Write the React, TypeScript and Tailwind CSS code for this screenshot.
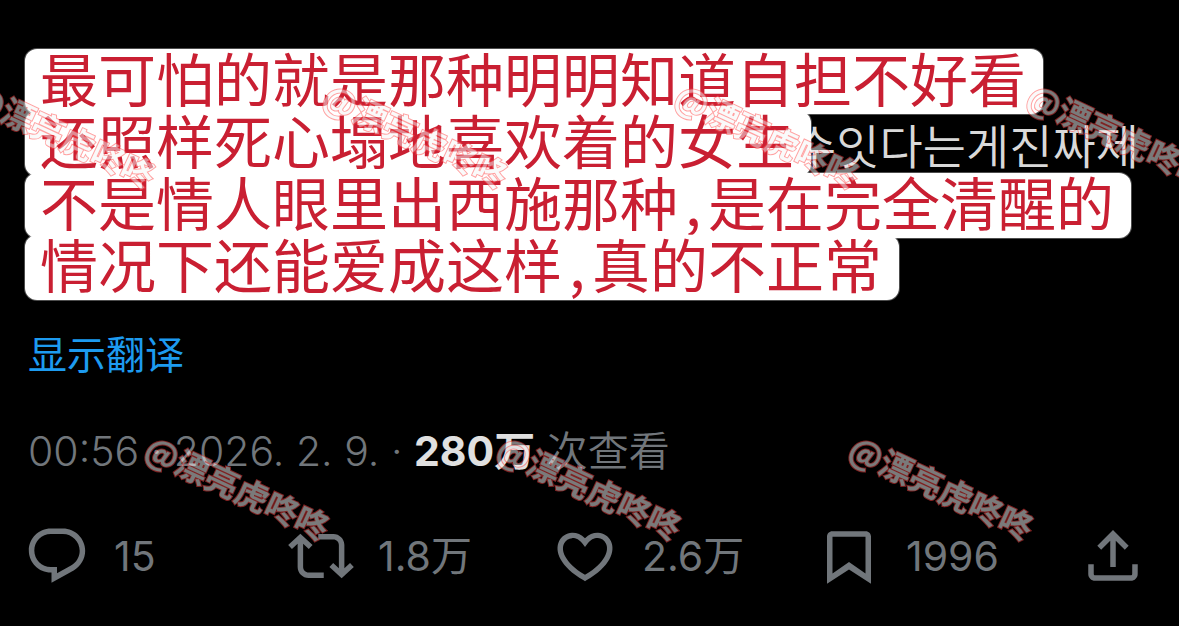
import type { ReactNode } from "react";

const REPLY =
  "M1.751 10c0-4.42 3.584-8 8.005-8h4.366c4.49 0 8.129 3.64 8.129 8.13 0 2.96-1.607 5.68-4.196 7.11l-8.054 4.46v-3.69h-.067c-4.49.1-8.183-3.51-8.183-8.01zm8.005-6c-3.317 0-6.005 2.69-6.005 6 0 3.37 2.77 6.08 6.138 6.01l.351-.01h1.761v2.3l5.087-2.81c1.951-1.08 3.163-3.13 3.163-5.36 0-3.39-2.744-6.13-6.129-6.13H9.756z";
const REPOST =
  "M4.5 3.88l4.432 4.14-1.364 1.46L5.5 7.55V16c0 1.1.896 2 2 2H13v2H7.5c-2.209 0-4-1.79-4-4V7.55L1.432 9.48.068 8.02 4.5 3.88zM16.5 6H11V4h5.5c2.209 0 4 1.79 4 4v8.45l2.068-1.93 1.364 1.46-4.432 4.14-4.432-4.14 1.364-1.46 2.068 1.93V8c0-1.1-.896-2-2-2z";
const LIKE =
  "M16.697 5.5c-1.222-.06-2.679.51-3.89 2.16l-.805 1.09-.806-1.09C9.984 6.01 8.526 5.44 7.304 5.5c-1.243.07-2.349.78-2.91 1.91-.552 1.12-.633 2.78.479 4.82 1.074 1.97 3.257 4.27 7.129 6.61 3.87-2.34 6.052-4.64 7.126-6.61 1.111-2.04 1.03-3.7.477-4.82-.561-1.13-1.666-1.84-2.908-1.91zm4.187 7.69c-1.351 2.48-4.001 5.12-8.379 7.67l-.503.3-.504-.3c-4.379-2.55-7.029-5.19-8.382-7.67-1.36-2.5-1.41-4.86-.514-6.67.887-1.79 2.647-2.91 4.601-3.01 1.651-.09 3.368.56 4.798 2.01 1.429-1.45 3.146-2.1 4.796-2.01 1.954.1 3.714 1.22 4.601 3.01.896 1.81.846 4.17-.514 6.67z";
const BOOKMARK =
  "M4 4.9C4 3.85 4.85 3 5.9 3h12.2C19.15 3 20 3.85 20 4.9v17.2l-8-5.2-8 5.2V4.9zM6 5v13.4l6-4.2 6 4.2V5H6z";
const SHARE =
  "M12 2.59l5.7 5.7-1.41 1.42L13 6.41V16h-2V6.41l-3.3 3.3-1.41-1.42L12 2.59zM21 15l-.02 3.51c0 1.38-1.12 2.49-2.5 2.49H5.5C4.11 21 3 19.88 3 18.5V15h2v3.5c0 .28.22.5.5.5h12.98c.28 0 .5-.22.5-.5L19 15h2z";

function Action({ label, path, count }: { label: string; path: string; count?: string }) {
  return (
    <button type="button" aria-label={label} className="flex items-center gap-6 text-left">
      <svg viewBox="0 0 24 24" className="size-[66px] shrink-0 fill-current" aria-hidden="true">
        <path d={path} />
      </svg>
      {count && <span className="text-[41px] leading-[50px] font-[380] whitespace-nowrap">{count}</span>}
    </button>
  );
}

function Line({ children }: { children: ReactNode }) {
  return (
    <span className="relative z-10 block h-[65px] w-fit rounded-xl bg-white pr-[17px] pl-[15px] text-[58px] leading-[57px] whitespace-nowrap text-[#c91f32] ring-1 ring-white/30">
      {children}
    </span>
  );
}

function Comma() {
  return <span className="inline-block w-[30px] text-center">,</span>;
}

function Watermarks({ className, count }: { className: string; count: number }) {
  return (
    <div className={"absolute flex opacity-50 " + className}>
      {Array.from({ length: count }, (_, i) => (
        <span
          key={i}
          className="w-[352px] shrink-0 origin-left rotate-25 text-[33px] leading-[34px] font-bold whitespace-nowrap text-[#f5f5f5] [-webkit-text-stroke:2px_#ff4545] [paint-order:stroke_fill]"
        >
          @漂亮虎咚咚
        </span>
      ))}
    </div>
  );
}

export default function App() {
  return (
    <main className="relative min-h-screen overflow-hidden bg-black pt-[49px] pb-8 font-['Inter','Noto_Sans_CJK_SC',sans-serif] text-[#71767b]">
      <article>
        <div className="flex flex-col pl-[25px] font-['Noto_Sans_CJK_SC',sans-serif]">
          <Line>最可怕的就是那种明明知道自担不好看</Line>
          <div className="-mt-[3px] flex items-center">
            <Line>还照样死心塌地喜欢着的女生</Line>
            <span className="-ml-[18px] text-[47px] leading-[60px] font-[350] whitespace-nowrap text-[#d9d9d9] font-['Noto_Sans_CJK_KR',sans-serif]">
              수잇다는게진짜제
            </span>
          </div>
          <div className="-mt-[3px]">
            <Line>
              不是情人眼里出西施那种
              <Comma />
              是在完全清醒的
            </Line>
          </div>
          <div className="-mt-[3px]">
            <Line>
              情况下还能爱成这样
              <Comma />
              真的不正常
            </Line>
          </div>
        </div>

        <a href="#translate" className="mt-[30px] ml-7 block w-fit text-[39px] leading-[50px] font-[380] text-[#1d9bf0]">
          显示翻译
        </a>

        <p className="mt-[46px] ml-7 text-[41px] leading-[50px] font-[350] whitespace-nowrap">
          <time>00:56 · 2026. 2. 9.</time> · <strong className="font-bold text-[#e0e0e0]">280万</strong> 次查看
        </p>

        <div className="mt-[47px] grid grid-cols-[repeat(4,1fr)_66px] pr-[33px] pl-6">
          <Action label="回复" path={REPLY} count="15" />
          <Action label="转帖" path={REPOST} count="1.8万" />
          <Action label="喜欢" path={LIKE} count="2.6万" />
          <Action label="书签" path={BOOKMARK} count="1996" />
          <Action label="分享" path={SHARE} />
        </div>
      </article>

      <div aria-hidden="true" className="pointer-events-none absolute inset-0 z-20 overflow-hidden font-['Noto_Sans_CJK_SC',sans-serif]">
        <Watermarks className="top-[76px] -left-[26px]" count={4} />
        <Watermarks className="top-[428px] left-[148px]" count={3} />
      </div>
    </main>
  );
}
